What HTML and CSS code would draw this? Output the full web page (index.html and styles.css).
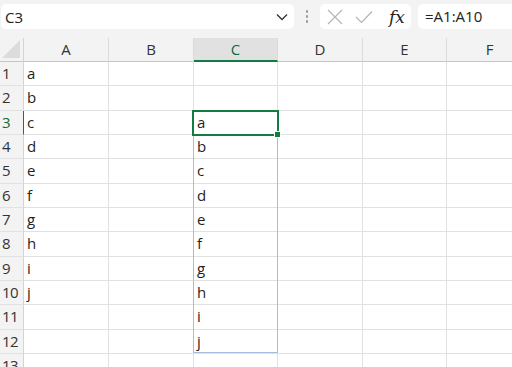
FILE: index.html
```html
<!DOCTYPE html>
<html>
<head>
<meta charset="utf-8">
<link rel="stylesheet" href="styles.css">
</head>
<body>
<div class="topbar">
  <div class="namebox">
    <span class="nb-text">C3</span>
    <svg class="chev" width="12" height="8" viewBox="0 0 12 8"><path d="M1 1.5 L6 6.5 L11 1.5" fill="none" stroke="#333" stroke-width="1.3"/></svg>
  </div>
  <div class="dots"><i></i><i></i><i></i></div>
  <div class="fxbox">
    <svg width="16" height="16" viewBox="0 0 16 16"><path d="M1 1 L15 15 M15 1 L1 15" stroke="#b5b5b5" stroke-width="1.2" fill="none"/></svg>
    <svg width="18" height="14" viewBox="0 0 18 14"><path d="M1 7 L6.5 12.5 L17 1.5" stroke="#b5b5b5" stroke-width="1.2" fill="none"/></svg>
    <span class="fx">fx</span>
  </div>
  <div class="formula">=A1:A10</div>
</div>
<div class="sheet">
  <div class="grid">
    <div class="corner"><div class="tri"></div></div>
    <div class="ch">A</div><div class="ch">B</div><div class="ch sel">C</div><div class="ch">D</div><div class="ch">E</div><div class="ch last">F</div>

    <div class="rh">1</div><div class="c">a</div><div class="c"></div><div class="c"></div><div class="c"></div><div class="c"></div><div class="c last"></div>
    <div class="rh">2</div><div class="c">b</div><div class="c"></div><div class="c"></div><div class="c"></div><div class="c"></div><div class="c last"></div>
    <div class="rh sel">3</div><div class="c">c</div><div class="c"></div><div class="c">a</div><div class="c"></div><div class="c"></div><div class="c last"></div>
    <div class="rh">4</div><div class="c">d</div><div class="c"></div><div class="c">b</div><div class="c"></div><div class="c"></div><div class="c last"></div>
    <div class="rh">5</div><div class="c">e</div><div class="c"></div><div class="c">c</div><div class="c"></div><div class="c"></div><div class="c last"></div>
    <div class="rh">6</div><div class="c">f</div><div class="c"></div><div class="c">d</div><div class="c"></div><div class="c"></div><div class="c last"></div>
    <div class="rh">7</div><div class="c">g</div><div class="c"></div><div class="c">e</div><div class="c"></div><div class="c"></div><div class="c last"></div>
    <div class="rh">8</div><div class="c">h</div><div class="c"></div><div class="c">f</div><div class="c"></div><div class="c"></div><div class="c last"></div>
    <div class="rh">9</div><div class="c">i</div><div class="c"></div><div class="c">g</div><div class="c"></div><div class="c"></div><div class="c last"></div>
    <div class="rh">10</div><div class="c">j</div><div class="c"></div><div class="c">h</div><div class="c"></div><div class="c"></div><div class="c last"></div>
    <div class="rh">11</div><div class="c"></div><div class="c"></div><div class="c">i</div><div class="c"></div><div class="c"></div><div class="c last"></div>
    <div class="rh">12</div><div class="c"></div><div class="c"></div><div class="c">j</div><div class="c"></div><div class="c"></div><div class="c last"></div>
    <div class="rh">13</div><div class="c"></div><div class="c"></div><div class="c"></div><div class="c"></div><div class="c"></div><div class="c last"></div>
  </div>
  <div class="spill"></div>
  <div class="active"><div class="handle"></div></div>
</div>
</body>
</html>
```
FILE: styles.css
```css
html, body {
  margin: 0;
  padding: 0;
  background: #ffffff;
  font-family: "Open Sans", "Noto Sans", sans-serif;
  color: #212121;
  overflow: hidden;
  width: 512px;
  height: 367px;
}
.topbar {
  height: 38px;
  background: #f3f3f3;
  display: flex;
  align-items: flex-start;
  padding-top: 4px;
  box-sizing: border-box;
}
.namebox {
  margin-left: 1px;
  width: 293px;
  height: 25px;
  background: #fff;
  border-radius: 5px;
  display: flex;
  align-items: center;
  justify-content: space-between;
  padding: 0 6px 0 4px;
  box-sizing: border-box;
}
.nb-text { font-size: 15px; color: #222; }
.chev { margin-top: 1px; }
.dots {
  width: 26px;
  height: 25px;
  display: flex;
  flex-direction: column;
  align-items: center;
  justify-content: center;
  gap: 2px;
}
.dots i {
  display: block;
  width: 2px;
  height: 3px;
  background: #9a9a9a;
  border-radius: 1px;
}
.fxbox {
  width: 91px;
  height: 25px;
  background: #fff;
  border-radius: 5px;
  display: flex;
  align-items: center;
  padding-left: 7px;
  box-sizing: border-box;
  gap: 12px;
}
.fx {
  font-family: "DejaVu Serif", "Liberation Serif", serif;
  font-style: italic;
  font-size: 17px;
  color: #222;
  margin-left: 4px;
}
.formula {
  margin-left: 7px;
  flex: 1;
  height: 25px;
  background: #fff;
  border-radius: 5px 0 0 5px;
  font-size: 15px;
  line-height: 25px;
  padding-left: 7px;
  color: #222;
}
.sheet {
  position: relative;
}
.grid {
  display: grid;
  grid-template-columns: 24px 85px 85px 84px 85px 84px 85px;
  grid-template-rows: 24px repeat(13, 24.33px);
}
.corner {
  background: #f3f3f3;
  border-right: 1px solid #d4d4d4;
  border-bottom: 1px solid #c6c6c6;
  position: relative;
  box-sizing: border-box;
}
.tri {
  position: absolute;
  right: 3px;
  bottom: 3px;
  width: 0;
  height: 0;
  border-left: 18px solid transparent;
  border-bottom: 18px solid #dcdcdc;
}
.ch {
  background: #f3f3f3;
  border-right: 1px solid #dadada;
  border-bottom: 1px solid #c6c6c6;
  box-sizing: border-box;
  text-align: center;
  font-size: 15px;
  line-height: 23px;
  color: #333;
}
.ch.sel {
  background: #e1e1e1;
  color: #0e6b3a;
  border-bottom: 2px solid #137a43;
}
.ch.last, .c.last { border-right: none; }
.rh {
  background: #f3f3f3;
  border-right: 1px solid #d4d4d4;
  border-bottom: 1px solid #e1e1e1;
  box-sizing: border-box;
  font-size: 15px;
  line-height: 23px;
  padding-left: 2px;
  color: #333;
  letter-spacing: -0.5px;
}
.rh.sel {
  background: #f3f3f3;
  color: #0e6b3a;
  border-right: 1px solid #137a43;
}
.c {
  border-right: 1px solid #e1e1e1;
  border-bottom: 1px solid #e1e1e1;
  box-sizing: border-box;
  font-size: 15px;
  line-height: 23px;
  padding-left: 3px;
  color: #1f1f1f;
}
.spill {
  position: absolute;
  left: 193px;
  top: 72px;
  width: 85px;
  height: 243px;
  border: 1px solid #a8bbe0;
  box-sizing: border-box;
  pointer-events: none;
}
.active {
  position: absolute;
  left: 192px;
  top: 72px;
  width: 87px;
  height: 26px;
  border: 2px solid #137a43;
  box-sizing: border-box;
}
.handle {
  position: absolute;
  right: -4px;
  bottom: -4px;
  width: 5px;
  height: 5px;
  background: #137a43;
  border: 1px solid #fff;
}
```
